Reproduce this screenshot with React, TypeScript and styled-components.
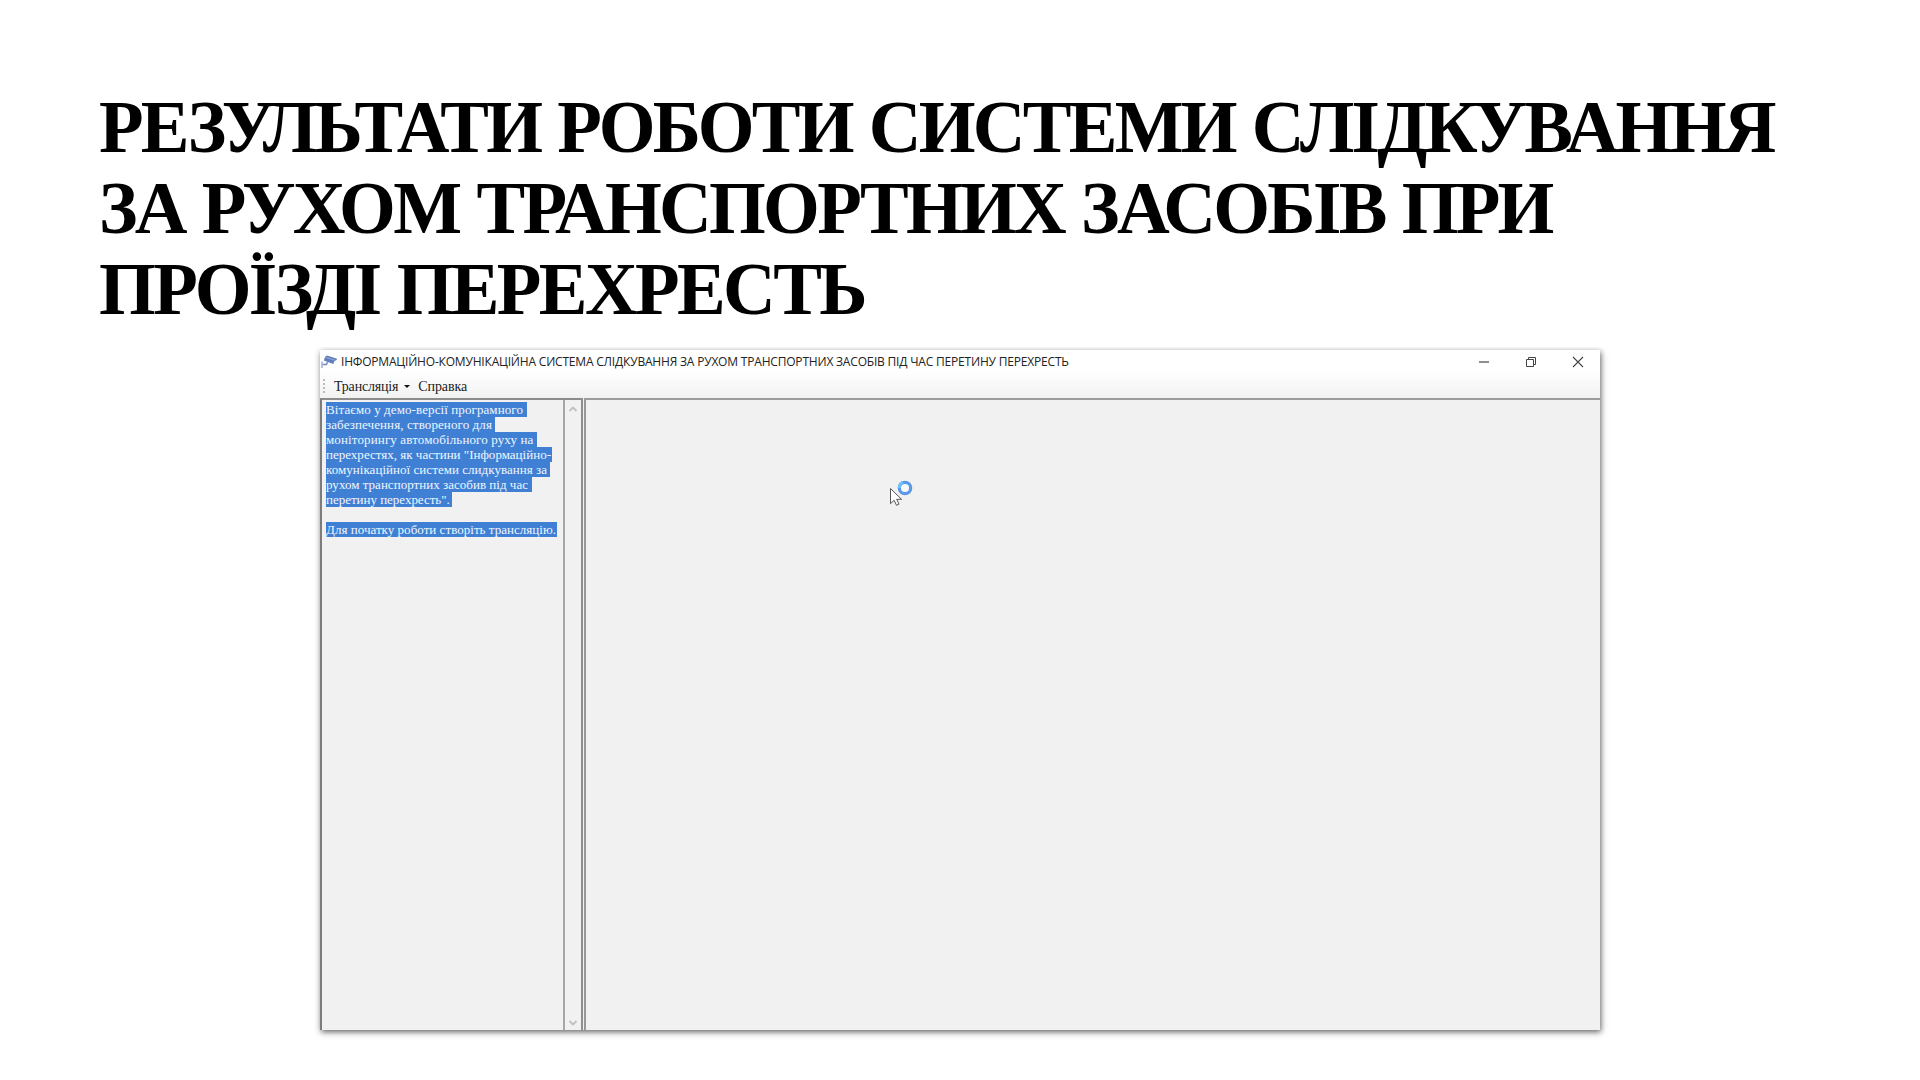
import React from 'react';
import styled, { createGlobalStyle } from 'styled-components';

const GlobalStyle = createGlobalStyle`
  * { box-sizing: border-box; }
  html, body { margin: 0; background: #fff; overflow: hidden; }
`;

const Slide = styled.main`
  width: 1920px;
  height: 1080px;
  padding: 87px 99px 0;
  background: #fff;
  overflow: hidden;
`;

const Heading = styled.h1`
  margin: 0;
  height: 263px;
  font: bold 73px/81px 'Liberation Serif', 'Times New Roman', serif;
  word-spacing: 1.5px;
  color: #000;
`;

const HeadingLine = styled.span<{ $spacing: number }>`
  display: block;
  white-space: nowrap;
  letter-spacing: ${(p) => p.$spacing}px;
`;

const AppWindow = styled.section`
  display: flex;
  flex-direction: column;
  width: 1280px;
  height: 680px;
  margin-left: 221px;
  background: #f1f1f1;
  box-shadow: 1px 2px 6px rgba(0, 0, 0, 0.62);
  clip-path: inset(-3px -12px -14px -6px);
`;

const TitleBar = styled.header`
  display: flex;
  align-items: center;
  height: 23px;
  flex: none;
  background: #fff;
`;

const WindowTitle = styled.span`
  flex: 1;
  padding: 1px 0 0 3px;
  font: 12px/24px 'Open Sans', 'Noto Sans', sans-serif;
  letter-spacing: -0.19px;
  white-space: nowrap;
  color: #222;
`;

const WindowControls = styled.div`
  display: flex;
  width: 140px;
  height: 22px;
`;

const ControlButton = styled.span`
  width: 47px;
  height: 22px;
  flex: none;
  display: flex;
  align-items: center;
  justify-content: center;
`;

const Toolbar = styled.nav`
  display: flex;
  align-items: center;
  height: 25px;
  flex: none;
  padding-left: 3px;
  background: linear-gradient(#fefefe, #f2f2f2);
`;

const Grip = styled.span`
  width: 2px;
  height: 14px;
  margin-right: 9px;
  background: repeating-linear-gradient(#bbb 0 2px, transparent 2px 4px);
`;

const MenuItem = styled.span<{ $spacing: number }>`
  display: flex;
  align-items: center;
  padding-top: 2px;
  font: 14px/22px 'Liberation Serif', 'Times New Roman', serif;
  letter-spacing: ${(p) => p.$spacing}px;
  color: #1c1c1c;
  white-space: nowrap;
`;

const Caret = styled.span`
  margin: 0 8px 0 6px;
  border: solid transparent;
  border-width: 3px 3px 0;
  border-top-color: #111;
`;

const Body = styled.div`
  display: flex;
  flex: 1;
  min-height: 0;
`;

const LogPanel = styled.aside`
  display: flex;
  width: 263px;
  border: solid #8e8e8e;
  border-width: 2px 2px 0 2px;
  border-left-color: #7c7c7c;
  border-top-color: #8c8c8c;
`;

const LogText = styled.div`
  flex: 1;
  padding: 2px 0 0 4px;
  font: 13px/15px 'Liberation Serif', 'Times New Roman', serif;
  color: #eff6ff;
`;

const LogLine = styled.div<{ $spacing: number; $width: number }>`
  width: ${(p) => p.$width}px;
  height: 15px;
  background: ${(p) => (p.$width ? '#3f80d5' : 'transparent')};
  letter-spacing: ${(p) => p.$spacing}px;
  white-space: nowrap;
`;

const ScrollBar = styled.div`
  display: flex;
  flex-direction: column;
  align-items: center;
  justify-content: space-between;
  width: 18px;
  padding: 5px 0 3px;
  border-left: 2px solid #a6a6a6;
`;

const VideoPanel = styled.section`
  position: relative;
  flex: 1;
  margin-left: 1px;
  border-left: 2px solid #989898;
  border-top: 2px solid #9c9c9c;
`;

const Cursor = styled.svg`
  position: absolute;
  left: 303px;
  top: 77px;
`;

const headingLines = [
  { text: 'РЕЗУЛЬТАТИ РОБОТИ СИСТЕМИ СЛІДКУВАННЯ', spacing: -2.75 },
  { text: 'ЗА РУХОМ ТРАНСПОРТНИХ ЗАСОБІВ ПРИ', spacing: -2.71 },
  { text: 'ПРОЇЗДІ ПЕРЕХРЕСТЬ', spacing: -2.62 },
];

const logLines = [
  { text: 'Вітаємо у демо-версії програмного', spacing: 0.092, width: 201 },
  { text: 'забезпечення, створеного для', spacing: 0.104, width: 169 },
  { text: 'моніторингу автомобільного руху на', spacing: 0.131, width: 211 },
  { text: 'перехрестях, як частини "Інформаційно-', spacing: 0.009, width: 226 },
  { text: 'комунікаційної системи слидкування за', spacing: 0.04, width: 224 },
  { text: 'рухом транспортних засобив під час', spacing: 0.024, width: 206 },
  { text: 'перетину перехресть".', spacing: -0.02, width: 126 },
  { text: '', spacing: 0, width: 0 },
  { text: 'Для початку роботи створіть трансляцію.', spacing: 0.029, width: 230.5 },
];

const CameraIcon = () => (
  <svg width="18" height="18" viewBox="0 0 18 18">
    <path d="M5.2 3.7 7 2.5l10 3.2-.3 1.4-2.2 1-1.2 3L3.8 7.5z" fill="#627fbd" />
    <path d="M5.4 4.3 15.8 7.5" stroke="#9db1dc" strokeWidth=".8" />
    <path d="M7.6 8.9 6.5 11.5H2.8" fill="none" stroke="#7089c0" strokeWidth="1.3" />
    <path d="M2 8.5v6.5" stroke="#8ba0cf" strokeWidth="1.3" />
  </svg>
);

const Chevron = ({ up }: { up?: boolean }) => (
  <svg width="10" height="8" viewBox="0 0 10 8">
    <path d={up ? 'M1.5 6 5 2.5 8.5 6' : 'M1.5 2 5 5.5 8.5 2'} fill="none" stroke="#c0c0c0" strokeWidth="1.8" />
  </svg>
);

export default function App() {
  return (
    <Slide>
      <GlobalStyle />
      <Heading>
        {headingLines.map((l) => (
          <HeadingLine key={l.text} $spacing={l.spacing}>{l.text}</HeadingLine>
        ))}
      </Heading>
      <AppWindow>
        <TitleBar>
          <CameraIcon />
          <WindowTitle>
            ІНФОРМАЦІЙНО-КОМУНІКАЦІЙНА СИСТЕМА СЛІДКУВАННЯ ЗА РУХОМ ТРАНСПОРТНИХ ЗАСОБІВ ПІД ЧАС ПЕРЕТИНУ ПЕРЕХРЕСТЬ
          </WindowTitle>
          <WindowControls>
            <ControlButton>
              <svg width="12" height="12"><path d="M1 6h10" stroke="#444" strokeWidth="1.2" /></svg>
            </ControlButton>
            <ControlButton>
              <svg width="12" height="12" fill="none" stroke="#444">
                <path d="M1.5 3.5h7v7h-7z" />
                <path d="M3.5 3.5v-2h7v7h-2" />
              </svg>
            </ControlButton>
            <ControlButton>
              <svg width="12" height="12"><path d="m1 1 10 10M11 1 1 11" stroke="#444" strokeWidth="1.1" /></svg>
            </ControlButton>
          </WindowControls>
        </TitleBar>
        <Toolbar>
          <Grip />
          <MenuItem $spacing={-0.2}>Трансляція<Caret /></MenuItem>
          <MenuItem $spacing={-0.06}>Справка</MenuItem>
        </Toolbar>
        <Body>
          <LogPanel>
            <LogText>
              {logLines.map((l, i) => (
                <LogLine key={i} $spacing={l.spacing} $width={l.width}>{l.text}</LogLine>
              ))}
            </LogText>
            <ScrollBar>
              <Chevron up />
              <Chevron />
            </ScrollBar>
          </LogPanel>
          <VideoPanel>
            <Cursor width="26" height="32" viewBox="0 0 26 32">
              <circle cx="16" cy="11" r="5.7" fill="#fafafa" stroke="#5a9ae6" strokeWidth="3.2" />
              <path d="M10.3 11A5.7 5.7 0 0 1 14 5.6" fill="none" stroke="#72c0f6" strokeWidth="3.2" />
              <path d="M1.5 11.5v15.2l3.6-3.4 2.4 5 2.5-1.2-2.3-4.8h4.9z" fill="#fff" stroke="#555" strokeWidth="1" />
            </Cursor>
          </VideoPanel>
        </Body>
      </AppWindow>
    </Slide>
  );
}
